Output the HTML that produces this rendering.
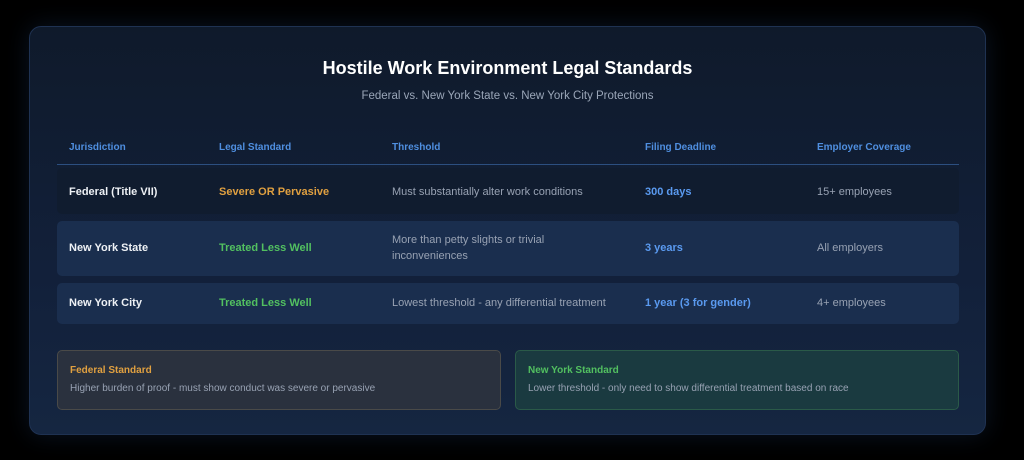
<!DOCTYPE html>
<html><head><style>
body{margin:0;width:1024px;height:460px;background:#000;font-family:"Liberation Sans",sans-serif;overflow:hidden;position:relative}
.card{position:absolute;left:29px;top:26px;width:955px;height:407px;border-radius:12px;background:linear-gradient(180deg,#0f1a2b 0%,#12203a 60%,#152641 100%);border:1px solid #1f3252;box-shadow:0 0 24px rgba(40,80,140,.25)}
.t{position:absolute;white-space:nowrap}
h1{position:absolute;left:0;right:0;top:31px;margin:0;text-align:center;font-size:18px;color:#fff;font-weight:bold}
.sub{position:absolute;left:0;right:0;top:63px;text-align:center;font-size:11.5px;color:#9aa6b8}
.hd{font-size:10px;color:#4f8fe0;font-weight:bold;top:115px}
.line{position:absolute;left:27px;width:902px;top:137px;height:1px;background:#2c4f80}
.row{position:absolute;left:27px;width:902px;border-radius:5px}
.b{font-size:11px;font-weight:bold}
.s{font-size:11px;color:#98a2b3;line-height:16px}
.box{position:absolute;top:323px;height:58px;width:442px;border-radius:5px}
</style></head><body>
<div class="card">
<h1>Hostile Work Environment Legal Standards</h1>
<div class="sub">Federal vs. New York State vs. New York City Protections</div>
<div class="t hd" style="left:39px">Jurisdiction</div>
<div class="t hd" style="left:189px">Legal Standard</div>
<div class="t hd" style="left:362px">Threshold</div>
<div class="t hd" style="left:615px">Filing Deadline</div>
<div class="t hd" style="left:787px">Employer Coverage</div>
<div class="line"></div>
<div class="row" style="top:141px;height:46px;background:#101c2f"></div>
<div class="row" style="top:194px;height:55px;background:#1a2e4e"></div>
<div class="row" style="top:256px;height:41px;background:#1a2e4e"></div>

<div class="t b" style="left:39px;top:159px;color:#eef1f5">Federal (Title VII)</div>
<div class="t b" style="left:189px;top:159px;color:#e0a040">Severe OR Pervasive</div>
<div class="t s" style="left:362px;top:157px">Must substantially alter work conditions</div>
<div class="t b" style="left:615px;top:159px;color:#5a9af0">300 days</div>
<div class="t s" style="left:787px;top:157px">15+ employees</div>

<div class="t b" style="left:39px;top:215px;color:#eef1f5">New York State</div>
<div class="t s" style="left:362px;top:205px">More than petty slights or trivial<br>inconveniences</div>
<div class="t b" style="left:189px;top:215px;color:#52c060">Treated Less Well</div>
<div class="t b" style="left:615px;top:215px;color:#5a9af0">3 years</div>
<div class="t s" style="left:787px;top:213px">All employers</div>

<div class="t b" style="left:39px;top:270px;color:#eef1f5">New York City</div>
<div class="t b" style="left:189px;top:270px;color:#52c060">Treated Less Well</div>
<div class="t s" style="left:362px;top:268px">Lowest threshold - any differential treatment</div>
<div class="t b" style="left:615px;top:270px;color:#5a9af0">1 year (3 for gender)</div>
<div class="t s" style="left:787px;top:268px">4+ employees</div>

<div class="box" style="left:27px;background:#2a313e;border:1px solid #4a4a48"></div>
<div class="box" style="left:485px;background:#1a3a40;border:1px solid #2a5a48"></div>
<div class="t" style="left:40px;top:338px;font-size:10px;font-weight:bold;color:#e0a040">Federal Standard</div>
<div class="t s" style="left:40px;top:354px;font-size:10px">Higher burden of proof - must show conduct was severe or pervasive</div>
<div class="t" style="left:498px;top:338px;font-size:10px;font-weight:bold;color:#52c060">New York Standard</div>
<div class="t s" style="left:498px;top:354px;font-size:10px">Lower threshold - only need to show differential treatment based on race</div>
</div>
</body></html>
